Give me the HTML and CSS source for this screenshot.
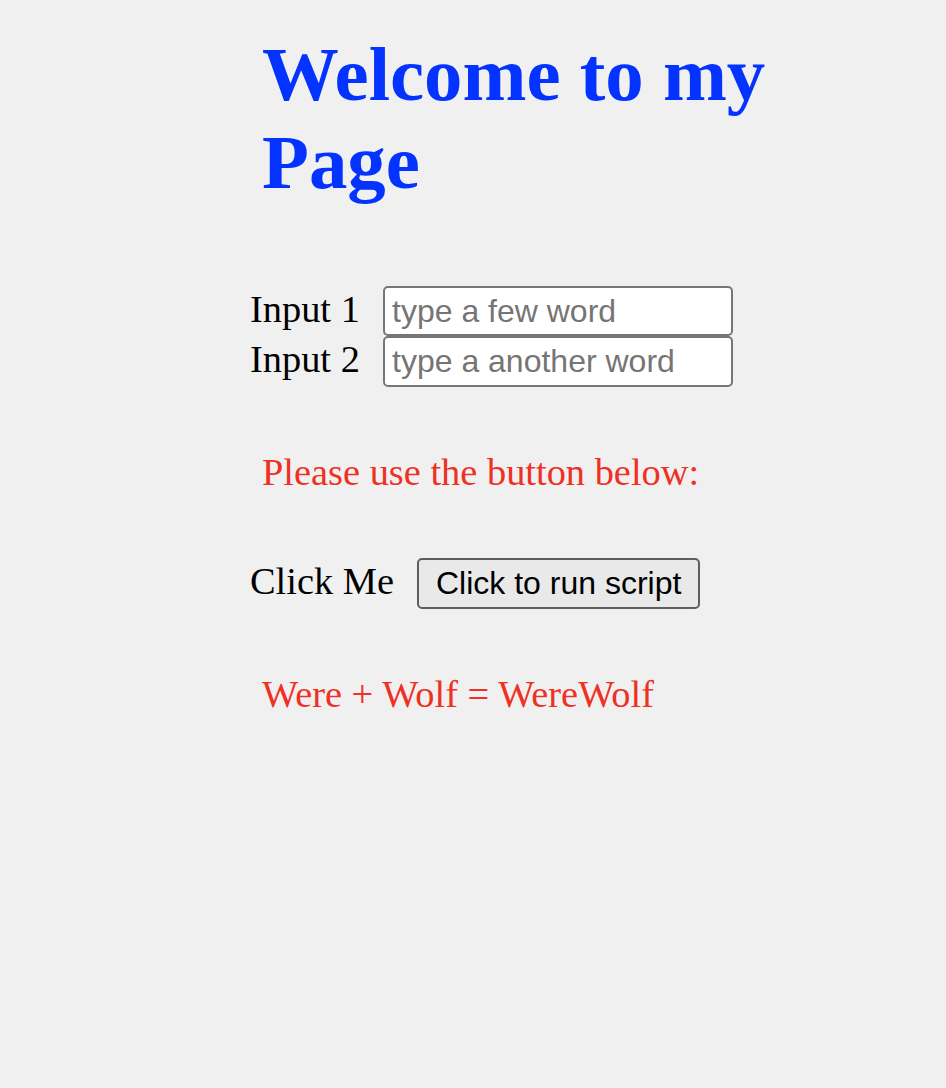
FILE: index.html
```html
<!DOCTYPE html>
<html lang="en">
<head>
<meta charset="utf-8">
<title>Welcome</title>
<link rel="stylesheet" href="styles.css">
</head>
<body>
<main class="page">
  <h1 class="title">Welcome to my Page</h1>
  <form class="fields">
    <label class="field-label" for="in1">Input 1</label>
    <input class="field-input" id="in1" type="text" placeholder="type a few word">
    <label class="field-label" for="in2">Input 2</label>
    <input class="field-input field-input-last" id="in2" type="text" placeholder="type a another word">
  </form>
  <p class="note">Please use the button below:</p>
  <div class="action">
    <span class="action-label">Click Me</span>
    <button class="run-btn" type="button">Click to run script</button>
  </div>
  <p class="note result">Were + Wolf = WereWolf</p>
</main>
</body>
</html>
```

FILE: styles.css
```css
html, body {
  margin: 0;
  padding: 0;
  background: #f0f0f0;
}

body {
  font-family: "Liberation Serif", "Times New Roman", serif;
  font-size: 38.4px;
  color: #000;
}

.page {
  margin-left: 250px;
  padding-top: 31px;
  width: 640px;
}

.title {
  margin: 0;
  padding-left: 12px;
  width: 560px;
  font-size: 76.8px;
  font-weight: bold;
  line-height: 88px;
  color: #0433ff;
}

.fields {
  margin-top: 79px;
  display: grid;
  grid-template-columns: 133px 350px;
  align-items: baseline;
}

.field-label {
  line-height: 44px;
}

.field-input {
  box-sizing: border-box;
  width: 350px;
  height: 50px;
  margin: 0;
  padding: 0 7px;
  border: 2px solid #767676;
  border-radius: 5px;
  background: #fff;
  font-family: "Liberation Sans", Arial, sans-serif;
  font-size: 32px;
  color: #000;
}

.field-input-last {
  height: 51px;
}

.field-input::placeholder {
  color: #757575;
}

.note {
  margin: 0;
  padding-left: 12px;
  color: #ee3124;
  line-height: 44px;
}

.fields + .note {
  margin-top: 63px;
}

.action {
  margin-top: 64px;
  display: flex;
  align-items: baseline;
  gap: 23px;
}

.action-label {
  line-height: 44px;
}

.run-btn {
  box-sizing: border-box;
  height: 51px;
  margin: 0;
  padding: 0 17px;
  border: 2px solid #5e5e5e;
  border-radius: 5px;
  background: #e9e9e9;
  font-family: "Liberation Sans", Arial, sans-serif;
  font-size: 32px;
  color: #000;
}

.result {
  margin-top: 63px;
}
```
